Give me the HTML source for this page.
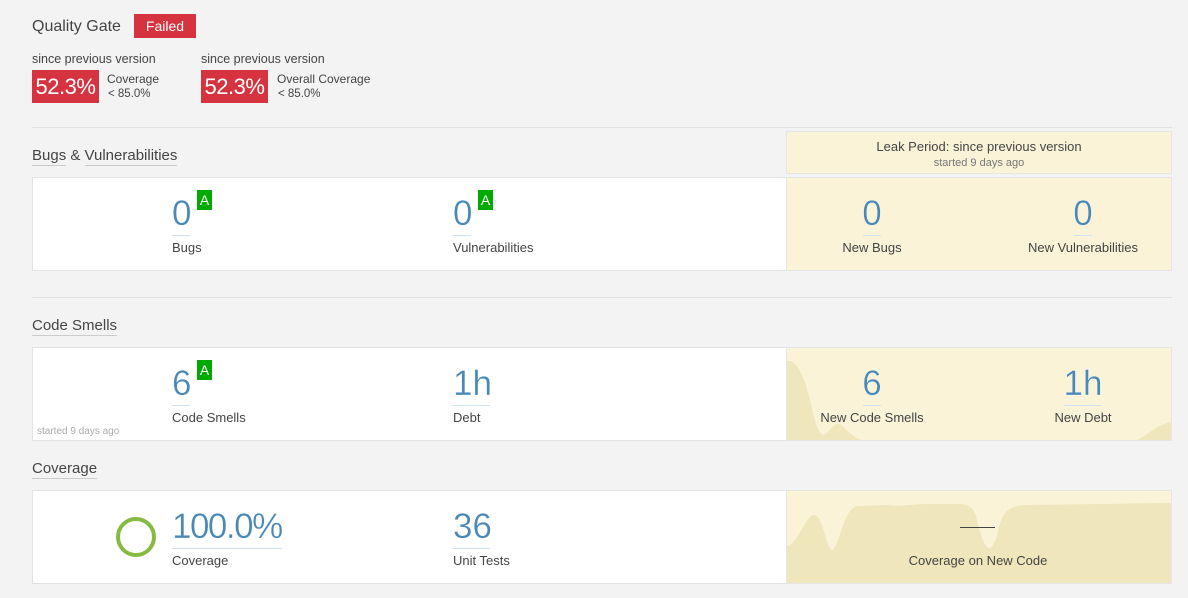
<!DOCTYPE html>
<html><head><meta charset="utf-8"><style>
*{margin:0;padding:0;box-sizing:border-box}
body{width:1188px;height:598px;background:#f3f3f3;font-family:"Liberation Sans",sans-serif;color:#444;position:relative;overflow:hidden}
.a{position:absolute;white-space:nowrap}
.h{font-size:15px;color:#444}
.h span{border-bottom:1px solid #ccc;padding-bottom:1px}
.panel{position:absolute;left:32px;width:1140px;height:94px;background:#fff;border:1px solid #e2e2e2}
.leak{position:absolute;left:786px;width:386px;background:#faf3d7;border:1px solid #e6e6e6;overflow:hidden}
.num{position:absolute;font-size:35px;color:#4a88b6;line-height:40px;white-space:nowrap;-webkit-text-stroke:0.3px #fff}
.ul{position:absolute;height:1px;background:#cfe2ee}
.lbl{position:absolute;font-size:13px;color:#444;white-space:nowrap}
.c{transform:translateX(-50%);text-align:center}
.badge{position:absolute;width:15px;height:20px;background:#00aa00;color:#fff;font-size:14px;text-align:center;line-height:20px}
.sep{position:absolute;left:32px;width:1140px;height:1px;background:#e0e0e0}
</style></head><body>
<div class="a" style="left:32px;top:18px;font-size:16px;color:#444">Quality Gate</div>
<div class="a" style="left:134px;top:14px;width:62px;height:24px;background:#d4333f;color:#fff;font-size:14px;text-align:center;line-height:24px">Failed</div>

<div class="a" style="left:32px;top:52px;font-size:12.5px">since previous version</div>
<div class="a" style="left:32px;top:70px;width:67px;height:33px;background:#d4333f;color:#fff;font-size:22px;line-height:34px;text-align:center;letter-spacing:-0.5px">52.3%</div>
<div class="a" style="left:107px;top:72px;font-size:12px">Coverage</div>
<div class="a" style="left:108px;top:88px;font-size:11.5px">&lt; 85.0%</div>

<div class="a" style="left:201px;top:52px;font-size:12.5px">since previous version</div>
<div class="a" style="left:201px;top:70px;width:67px;height:33px;background:#d4333f;color:#fff;font-size:22px;line-height:34px;text-align:center;letter-spacing:-0.5px">52.3%</div>
<div class="a" style="left:277px;top:72px;font-size:12px">Overall Coverage</div>
<div class="a" style="left:278px;top:88px;font-size:11.5px">&lt; 85.0%</div>

<div class="sep" style="top:127px"></div>

<div class="a h" style="left:32px;top:147px"><span>Bugs</span> &amp; <span>Vulnerabilities</span></div>
<div class="leak" style="top:131px;height:43px">
 <div class="lbl c" style="left:192px;top:7px;font-size:13px">Leak Period: since previous version</div>
 <div class="lbl c" style="left:192px;top:25px;font-size:11px;color:#777">started 9 days ago</div>
</div>

<div class="panel" style="top:177px"></div>
<div class="leak" style="top:177px;height:94px"></div>
<div class="num" style="left:172px;top:194px">0</div>
<div class="badge" style="left:197px;top:190px">A</div>
<div class="ul" style="left:172px;top:235px;width:18px"></div>
<div class="lbl" style="left:172px;top:240px">Bugs</div>
<div class="num" style="left:453px;top:194px">0</div>
<div class="badge" style="left:478px;top:190px">A</div>
<div class="ul" style="left:453px;top:235px;width:18px"></div>
<div class="lbl" style="left:453px;top:240px">Vulnerabilities</div>
<div class="num c" style="left:872px;top:194px">0</div>
<div class="ul" style="left:863px;top:235px;width:18px"></div>
<div class="lbl c" style="left:872px;top:240px">New Bugs</div>
<div class="num c" style="left:1083px;top:194px">0</div>
<div class="ul" style="left:1074px;top:235px;width:18px"></div>
<div class="lbl c" style="left:1083px;top:240px">New Vulnerabilities</div>

<div class="sep" style="top:297px"></div>

<div class="a h" style="left:32px;top:317px"><span>Code Smells</span></div>
<div class="panel" style="top:347px"></div>
<div class="leak" style="top:347px;height:94px">
<svg width="386" height="94" style="position:absolute;left:0;top:0"><path d="M0 13 C10 10 18 30 25 60 C30 85 35 90 40 85 C45 80 48 75 52 76 C58 78 62 88 75 92 L350 92 C360 88 370 76 386 74 L386 94 L0 94Z" fill="#efe6bb"/></svg>
</div>
<div class="num" style="left:172px;top:364px">6</div>
<div class="badge" style="left:197px;top:360px">A</div>
<div class="ul" style="left:172px;top:405px;width:18px"></div>
<div class="lbl" style="left:172px;top:410px">Code Smells</div>
<div class="a" style="left:37px;top:426px;font-size:10px;color:#aaa">started 9 days ago</div>
<div class="num" style="left:453px;top:364px">1h</div>
<div class="ul" style="left:453px;top:405px;width:37px"></div>
<div class="lbl" style="left:453px;top:410px">Debt</div>
<div class="num c" style="left:872px;top:364px">6</div>
<div class="ul" style="left:863px;top:405px;width:18px"></div>
<div class="lbl c" style="left:872px;top:410px">New Code Smells</div>
<div class="num c" style="left:1083px;top:364px">1h</div>
<div class="ul" style="left:1064px;top:405px;width:37px"></div>
<div class="lbl c" style="left:1083px;top:410px">New Debt</div>

<div class="a h" style="left:32px;top:460px"><span>Coverage</span></div>
<div class="panel" style="top:490px"></div>
<div class="leak" style="top:490px;height:94px">
<svg width="386" height="94" style="position:absolute;left:0;top:0"><path d="M0 55 C10 55 18 25 27 24 C36 24 40 60 45 59 C52 58 56 18 70 15 L100 14 C115 16 125 13 140 13 L175 13 C180 14 188 15 190 30 C198 60 203 65 210 45 C215 20 220 15 240 14 L386 12 L386 94 L0 94Z" fill="#efe6bb"/></svg>
</div>
<svg class="a" style="left:115px;top:516px" width="42" height="42"><circle cx="21" cy="21" r="18" fill="none" stroke="#85bb43" stroke-width="4"/></svg>
<div class="num" style="left:172px;top:507px;letter-spacing:-1.5px">100.0%</div>
<div class="ul" style="left:172px;top:548px;width:110px"></div>
<div class="lbl" style="left:172px;top:553px">Coverage</div>
<div class="num" style="left:453px;top:507px">36</div>
<div class="ul" style="left:453px;top:548px;width:37px"></div>
<div class="lbl" style="left:453px;top:553px">Unit Tests</div>
<div class="a" style="left:960px;top:527px;width:35px;height:1px;background:#444"></div>
<div class="lbl c" style="left:978px;top:553px">Coverage on New Code</div>
</body></html>
